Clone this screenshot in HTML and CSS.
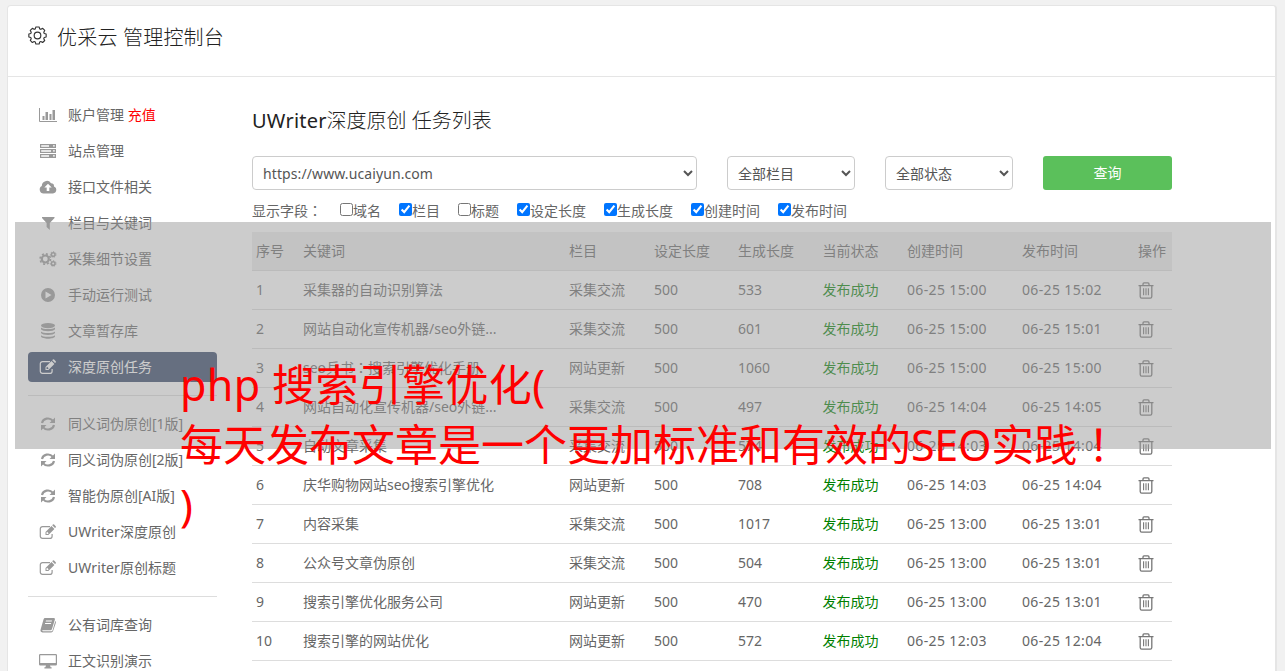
FILE: index.html
```html
<!DOCTYPE html>
<html lang="zh-CN">
<head>
<meta charset="utf-8">
<title>优采云 管理控制台</title>
<link rel="stylesheet" href="styles.css">
</head>
<body>
<svg class="defs" aria-hidden="true">
  <symbol id="chart" viewBox="0 0 18 16"><path d="M.5 1v13.500H18" fill="none" stroke="currentColor"/><path d="M3.500 9h2v4h-2zM6.500 5H9v8H6.500zM10.500 7h2v6h-2zM13.500 3H16v10h-2.500z"/></symbol>
  <symbol id="server" viewBox="0 0 18 16"><path fill-rule="evenodd" d="M1 1h16v4H1zM2.200 2.200v1.600H10V2.200zM14 2.200v1.400h1.800V2.200zM1 6h16v4H1zM2.200 7.200v1.600H12V7.200zM14 7.200v1.400h1.800V7.200zM1 11h16v4H1zM2.200 12.200v1.600H10v-1.600zM14 12.200v1.400h1.800v-1.400z"/></symbol>
  <symbol id="cloud" viewBox="0 0 18 16"><path fill-rule="evenodd" d="M4.500 14.500A4 4 0 0 1 2.800 7 5 5 0 0 1 12 4.200 3 3 0 0 1 15 7.400a3.700 3.700 0 0 1-1 7.100zM9 4.800 5.300 8.600h2.400V12h2.600V8.600h2.400z"/></symbol>
  <symbol id="filter" viewBox="0 0 18 16"><path d="M3 2h12.500v1l-4.700 5v7L7.600 12V8L3 3z"/></symbol>
  <symbol id="cogs" viewBox="0 0 18 16"><g fill="none" stroke="currentColor"><circle cx="6.300" cy="8" r="3.500" stroke-width="2.200"/><circle cx="6.300" cy="8" r="5.200" stroke-width="1.600" stroke-dasharray="2.040 2.040"/><circle cx="14.200" cy="3.500" r="1.800" stroke-width="1.500"/><circle cx="14.200" cy="3.500" r="2.800" stroke-dasharray="1.260 1.260"/><circle cx="14.200" cy="12.500" r="1.800" stroke-width="1.500"/><circle cx="14.200" cy="12.500" r="2.800" stroke-dasharray="1.260 1.260"/></g></symbol>
  <symbol id="play" viewBox="0 0 18 16"><path fill-rule="evenodd" d="M9 1a7 7 0 1 1 0 14A7 7 0 0 1 9 1zM6.500 4.500v7L12.500 8z"/></symbol>
  <symbol id="db" viewBox="0 0 18 16"><ellipse cx="9" cy="2.600" rx="7" ry="2.600"/><path d="M2 4.600c2 2 12 2 14 0v1.700c-1 2.600-13 2.600-14 0zM2 8.400c2 2 12 2 14 0v1.700c-1 2.600-13 2.600-14 0zM2 12.200c2 2 12 2 14 0v1.400c-1 2.900-13 2.900-14 0z"/></symbol>
  <symbol id="edit" viewBox="0 0 18 16"><path d="M11 2.600H3.500A2.200 2.200 0 0 0 1.300 4.800v7.400a2.200 2.200 0 0 0 2.200 2.200h7.400a2.200 2.200 0 0 0 2.200-2.200V10" fill="none" stroke="currentColor" stroke-width="1.200"/><path fill-rule="evenodd" d="m6.500 8 6-6L15.400 4.900l-6 6H6.500zM7.500 8.400v1.500H9l.6-.6-1.500-1.500zM13.200 1.300l.7-.7q.6-.5 1.200 0L16.700 2.200q.6.600 0 1.200l-.7.7z"/></symbol>
  <symbol id="sync" viewBox="0 0 18 16"><g fill="none" stroke="currentColor" stroke-width="2.100"><path d="M3 7a6 5.500 0 0 1 10.700-2.300M15 9A6 5.500 0 0 1 4.300 11.300"/></g><path d="M16 1.500V7h-5.500zM2 14.500V9h5.500z"/></symbol>
  <symbol id="book" viewBox="0 0 18 16"><path fill-rule="evenodd" d="M6 1h9q1.300.2.900 1.500L13 12q-.5 1.300-1.600 1.300H3.500q-1 .3.500 1h8.500q.8 0 1.100-1L16.300 4q1 .6.500 2l-2.700 8q-.5 1.400-2 1.400H3.500Q.9 14.800 1.600 12.400L4.500 2.400Q5 1 6 1zM7 3.500l-.3 1h6l.3-1zM6.200 6l-.3 1h6l.3-1z"/></symbol>
  <symbol id="desktop" viewBox="0 0 18 16"><path fill-rule="evenodd" d="M1.300 1h15.400q1.300 0 1.300 1.300v9q0 1.300-1.300 1.300H11l.6 1.600h1V15.400H5.400v-1.200h1l.6-1.600H1.300Q0 12.600 0 11.300v-9Q0 1 1.300 1zM1.200 2.200V10h15.600V2.200z"/></symbol>
  <symbol id="trash" viewBox="0 0 16 17"><g fill="none" stroke="currentColor" stroke-width="1.300"><path d="M.5 3.600h15M5 3.400V1.900Q5 .9 6 .9h4q1 0 1 1v1.500M2.200 3.600v11q0 1.600 1.500 1.600h8.600q1.500 0 1.500-1.600v-11"/><path d="M5.600 6.300v7M8 6.300v7M10.400 6.300v7" stroke-width="1.100"/></g></symbol>
</svg>

<div class="panel">
  <header class="top">
    <svg class="gear" viewBox="0 0 20 20"><g fill="none" stroke="currentColor" stroke-width="1.200" stroke-linejoin="round"><circle cx="10" cy="10" r="3.500"/><path d="M8.300 1h3.400l.6 2 1.200.5 2-1 2.100 2.200-1 2 .5 1.200 2 .6v3l-2 .6-.5 1.200 1 2-2.200 2.100-1.900-1-1.200.5-.6 2.100H8.300l-.6-2.100-1.200-.5-1.900 1-2.200-2.200 1-1.900-.5-1.200-2-.6v-3l2-.6.500-1.200-1-2 2.200-2.200 1.900 1 1.200-.5z"/></g></svg>
    <h1>优采云 管理控制台</h1>
  </header>
  <div class="body">
    <nav class="side">
      <a><svg><use href="#chart"/></svg><span>账户管理 <b>充值</b></span></a>
      <a><svg><use href="#server"/></svg>站点管理</a>
      <a><svg><use href="#cloud"/></svg>接口文件相关</a>
      <a><svg><use href="#filter"/></svg>栏目与关键词</a>
      <a><svg><use href="#cogs"/></svg>采集细节设置</a>
      <a><svg><use href="#play"/></svg>手动运行测试</a>
      <a><svg><use href="#db"/></svg>文章暂存库</a>
      <a class="active"><svg><use href="#edit"/></svg>深度原创任务</a>
      <hr>
      <a><svg><use href="#sync"/></svg>同义词伪原创[1版]</a>
      <a><svg><use href="#sync"/></svg>同义词伪原创[2版]</a>
      <a><svg><use href="#sync"/></svg>智能伪原创[AI版]</a>
      <a><svg><use href="#edit"/></svg><span><i>UWriter</i>深度原创</span></a>
      <a><svg><use href="#edit"/></svg><span><i>UWriter</i>原创标题</span></a>
      <hr>
      <a><svg><use href="#book"/></svg>公有词库查询</a>
      <a><svg><use href="#desktop"/></svg>正文识别演示</a>
    </nav>
    <main class="main">
      <h2><i>UWriter</i>深度原创 任务列表</h2>
      <form class="filters">
        <select class="site"><option>https://www.ucaiyun.com</option></select>
        <select><option>全部栏目</option></select>
        <select><option>全部状态</option></select>
        <button type="button">查询</button>
      </form>
      <div class="fields">
        <span>显示字段<span class="mid" lang="zh-TW">：</span></span>
        <label><input type="checkbox">域名</label>
        <label><input type="checkbox" checked>栏目</label>
        <label><input type="checkbox">标题</label>
        <label><input type="checkbox" checked>设定长度</label>
        <label><input type="checkbox" checked>生成长度</label>
        <label><input type="checkbox" checked>创建时间</label>
        <label><input type="checkbox" checked>发布时间</label>
      </div>
      <table>
        <colgroup><col class="c-no"><col class="c-key"><col class="c-s"><col class="c-m"><col class="c-s"><col class="c-m"><col class="c-t"><col class="c-u"><col></colgroup>
        <thead><tr><th>序号</th><th>关键词</th><th>栏目</th><th>设定长度</th><th>生成长度</th><th class="st">当前状态</th><th>创建时间</th><th>发布时间</th><th>操作</th></tr></thead>
        <tbody>
          <tr><td>1</td><td>采集器的自动识别算法</td><td>采集交流</td><td>500</td><td>533</td><td class="st ok">发布成功</td><td class="time">06-25 15:00</td><td class="time">06-25 15:02</td><td><svg><use href="#trash"/></svg></td></tr>
          <tr><td>2</td><td>网站自动化宣传机器/seo外链...</td><td>采集交流</td><td>500</td><td>601</td><td class="st ok">发布成功</td><td class="time">06-25 15:00</td><td class="time">06-25 15:01</td><td><svg><use href="#trash"/></svg></td></tr>
          <tr><td>3</td><td>seo兵书<span class="mid" lang="zh-TW">：</span>搜索引擎优化手册</td><td>网站更新</td><td>500</td><td>1060</td><td class="st ok">发布成功</td><td class="time">06-25 15:00</td><td class="time">06-25 15:00</td><td><svg><use href="#trash"/></svg></td></tr>
          <tr><td>4</td><td>网站自动化宣传机器/seo外链...</td><td>采集交流</td><td>500</td><td>497</td><td class="st ok">发布成功</td><td class="time">06-25 14:04</td><td class="time">06-25 14:05</td><td><svg><use href="#trash"/></svg></td></tr>
          <tr><td>5</td><td>自动文章采集</td><td>采集交流</td><td>500</td><td>574</td><td class="st ok">发布成功</td><td class="time">06-25 14:03</td><td class="time">06-25 14:04</td><td><svg><use href="#trash"/></svg></td></tr>
          <tr><td>6</td><td>庆华购物网站seo搜索引擎优化</td><td>网站更新</td><td>500</td><td>708</td><td class="st ok">发布成功</td><td class="time">06-25 14:03</td><td class="time">06-25 14:04</td><td><svg><use href="#trash"/></svg></td></tr>
          <tr><td>7</td><td>内容采集</td><td>采集交流</td><td>500</td><td>1017</td><td class="st ok">发布成功</td><td class="time">06-25 13:00</td><td class="time">06-25 13:01</td><td><svg><use href="#trash"/></svg></td></tr>
          <tr><td>8</td><td>公众号文章伪原创</td><td>采集交流</td><td>500</td><td>504</td><td class="st ok">发布成功</td><td class="time">06-25 13:00</td><td class="time">06-25 13:01</td><td><svg><use href="#trash"/></svg></td></tr>
          <tr><td>9</td><td>搜索引擎优化服务公司</td><td>网站更新</td><td>500</td><td>470</td><td class="st ok">发布成功</td><td class="time">06-25 13:00</td><td class="time">06-25 13:01</td><td><svg><use href="#trash"/></svg></td></tr>
          <tr><td>10</td><td>搜索引擎的网站优化</td><td>网站更新</td><td>500</td><td>572</td><td class="st ok">发布成功</td><td class="time">06-25 12:03</td><td class="time">06-25 12:04</td><td><svg><use href="#trash"/></svg></td></tr>
        </tbody>
      </table>
    </main>
  </div>
</div>
<div class="veil"></div>
<div class="caption"><span class="lead">php 搜索引擎优化(</span><br>每天发布文章是一个更加标准和有效的<span class="seo">SEO</span>实践<span class="mid" lang="zh-TW">！</span><br>)</div>
</body>
</html>
```

FILE: styles.css
```css
* { box-sizing: border-box; }
html, body { height: 100%; overflow: hidden; }
body {
  margin: 0;
  padding: 5px 8px 0 7px;
  background: #f1f1f1;
  color: #666;
  font: 14px/20px "Noto Sans", "Noto Sans CJK SC", sans-serif;
  font-weight: 400;
}
i, b { font-style: normal; font-weight: inherit; }
.defs { display: none; }
svg { display: block; fill: currentColor; }
/* full-width punctuation centred in its cell */
.mid { font-family: "Noto Sans CJK TC", sans-serif; line-height: 1; }

.panel {
  height: 666px;
  overflow: hidden;
  background: #fff;
  border: 1px solid #e5e5e5;
  border-right-width: 2px;
  border-bottom: 0;
  border-radius: 4px 4px 0 0;
}
.top {
  display: flex;
  align-items: center;
  height: 71px;
  padding: 0 20px 7px;
  border-bottom: 1px solid #e5e5e5;
  color: #333;
}
.gear { width: 19px; height: 19px; margin: -4px 10px 0 0; }
h1, h2 { margin: 0; font-size: 20px; font-weight: 300; line-height: 28px; color: #222; }
h1 { letter-spacing: .2px; }
.body { display: flex; gap: 35px; padding: 23px 20px 0; }

.side { width: 189px; flex: none; display: flex; flex-direction: column; gap: 6px; }
.side a {
  display: flex;
  align-items: center;
  flex: none;
  gap: 11px;
  height: 30px;
  padding-left: 11px;
  border-radius: 4px;
  white-space: nowrap;
}
.side svg { width: 18px; height: 16px; color: #999; flex: none; }
.side i { letter-spacing: .1px; }
.side b { color: #f00; }
.side .active { background: #334567; color: #fff; }
.side .active svg { color: #fff; }
.side hr { width: 100%; height: 1px; flex: none; margin: 7px 0; border: 0; background: #ddd; }

.main { width: 920px; padding-top: 7px; }
h2 i { font-weight: 400; letter-spacing: .2px; }
.filters { display: flex; gap: 30px; margin-top: 21px; }
.filters select {
  width: 128px;
  height: 34px;
  padding: 0 2px 0 6px;
  border: 1px solid #ccc;
  border-radius: 4px;
  background-color: #fff;
  color: #555;
  font: inherit;
}
.filters .site { width: 445px; letter-spacing: .1px; }
.filters button {
  width: 129px;
  height: 34px;
  padding: 0;
  border: 0;
  border-radius: 3px;
  background: #5bc05b;
  color: #fff;
  font: inherit;
}
.fields { display: flex; gap: 18px; height: 20px; margin: 11px 0; }
.fields label { display: flex; }
.fields input { width: 13px; height: 13px; margin: 2px 0 0; }

table { width: 920px; table-layout: fixed; border-collapse: separate; border-spacing: 0; }
th, td {
  height: 39px;
  padding: 0 4px;
  border-bottom: 1px solid #ddd;
  font-weight: 400;
  text-align: left;
  white-space: nowrap;
}
th { background: #ededed; }
td svg { width: 16px; height: 17px; margin-left: -.5px; color: #777; }
.st { padding-left: 3.500px; }
.ok { color: #008000; }
.time { letter-spacing: .36px; }
.c-no { width: 47px; }
.c-key { width: 266px; }
.c-s { width: 85px; }
.c-m { width: 84px; }
.c-t { width: 115px; }
.c-u { width: 116px; }

.veil {
  position: absolute;
  left: 15px;
  top: 222px;
  width: 1256px;
  height: 227px;
  background: rgba(153, 153, 153, .5);
}
.caption {
  position: absolute;
  left: 180px;
  top: 355px;
  color: #f00;
  font-size: 43px;
  font-weight: 400;
  line-height: 60px;
  white-space: nowrap;
}
.lead { letter-spacing: .350px; }
.seo { letter-spacing: -.300px; }
```
